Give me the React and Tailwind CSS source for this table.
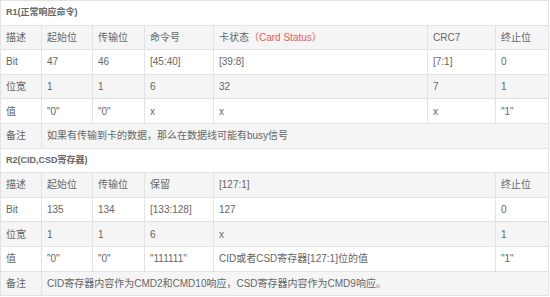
import React from "react";

const font = { fontFamily: '"Liberation Sans", "Noto Sans CJK SC", sans-serif' };

const Cell = ({ children, colSpan, className = "" }) => (
  <td
    colSpan={colSpan}
    className={`border border-[#e3e3e3] px-[5px] py-0 align-middle text-[#666] whitespace-nowrap overflow-hidden ${className}`}
  >
    {children}
  </td>
);

const r1 = {
  title: "R1(正常响应命令)",
  rows: [
    ["描述", "起始位", "传输位", "命令号", <span key="s">卡状态<span className="text-[#ef5a5a]">（Card Status）</span></span>, "CRC7", "终止位"],
    ["Bit", "47", "46", "[45:40]", "[39:8]", "[7:1]", "0"],
    ["位宽", "1", "1", "6", "32", "7", "1"],
    ["值", "\"0\"", "\"0\"", "x", "x", "x", "\"1\""],
  ],
  note: "如果有传输到卡的数据，那么在数据线可能有busy信号",
};

const r2 = {
  title: "R2(CID,CSD寄存器)",
  rows: [
    ["描述", "起始位", "传输位", "保留", "[127:1]", "终止位"],
    ["Bit", "135", "134", "[133:128]", "127", "0"],
    ["位宽", "1", "1", "6", "x", "1"],
    ["值", "\"0\"", "\"0\"", "\"111111\"", "CID或者CSD寄存器[127:1]位的值", "\"1\""],
  ],
  note: "CID寄存器内容作为CMD2和CMD10响应，CSD寄存器内容作为CMD9响应。",
};

const Block = ({ data, merged }) => (
  <>
    <tr className="h-[24.6px] bg-white">
      <Cell colSpan={7} className="font-bold text-[9px] text-[#333]">{data.title}</Cell>
    </tr>
    {data.rows.map((row, i) => (
      <tr key={i} className={`h-[24.6px] text-[10px] ${i % 2 === 0 ? "bg-[#f5f5f5]" : "bg-white"}`}>
        {row.map((c, j) => (
          <Cell key={j} colSpan={merged && j === 4 ? 2 : undefined}>{c}</Cell>
        ))}
      </tr>
    ))}
    <tr className="h-[24.6px] text-[10px] bg-[#f5f5f5]">
      <Cell>备注</Cell>
      <Cell colSpan={6}>{data.note}</Cell>
    </tr>
  </>
);

export default function App() {
  return (
    <div className="w-[550px] h-[297px] bg-white overflow-hidden" style={font}>
      <table className="table-fixed border-collapse w-[548px]">
        <colgroup>
          <col className="w-[41px]" />
          <col className="w-[51px]" />
          <col className="w-[52px]" />
          <col className="w-[69px]" />
          <col className="w-[214px]" />
          <col className="w-[68px]" />
          <col className="w-[53px]" />
        </colgroup>
        <tbody>
          <Block data={r1} />
          <Block data={r2} merged />
        </tbody>
      </table>
    </div>
  );
}
